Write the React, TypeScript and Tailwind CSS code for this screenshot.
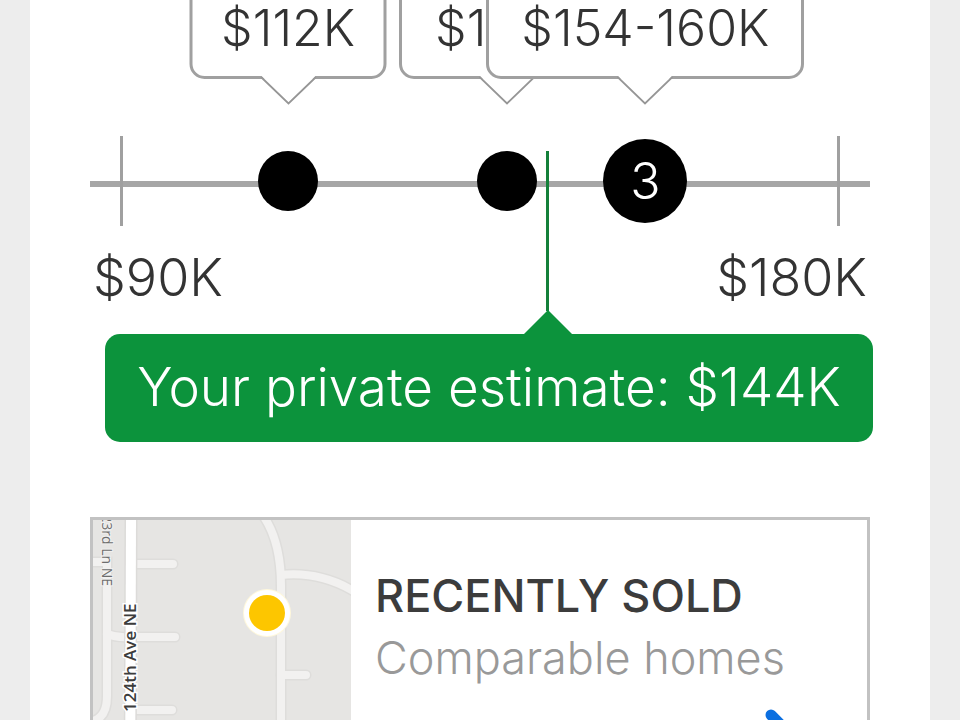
interface Comparable {
  label: string;
  left: string;
  width: string;
  count?: number;
}

const comparables: Comparable[] = [
  { label: "$112K", left: "left-[25.4%]", width: "w-[197px]" },
  { label: "$138K", left: "left-[53.5%]", width: "w-[216px]" },
  { label: "$154-160K", left: "left-[71.2%]", width: "w-[318px]", count: 3 },
];

function Callout({ label, left, width }: Comparable) {
  return (
    <div className={`absolute bottom-0 -translate-x-1/2 flex flex-col items-center ${left}`}>
      <div
        className={`h-[108px] rounded-[15px] border-3 border-[#a0a0a0] bg-white pt-6 text-center leading-[60px] whitespace-nowrap ${width}`}
      >
        {label}
      </div>
      <svg className="-mt-[3px] h-[29px] w-[56px]" viewBox="0 0 56 29" fill="none">
        <path d="M1 0H55L28 28Z" fill="#fff" />
        <path d="M0.5 1L28 27.5L55.5 1" stroke="#969696" strokeWidth="1.8" />
      </svg>
    </div>
  );
}

function Marker({ left, count }: Comparable) {
  return (
    <div
      className={`absolute top-1/2 flex -translate-x-1/2 -translate-y-1/2 items-center justify-center rounded-full bg-black text-white ${left} ${
        count ? "size-[84px]" : "size-[60px]"
      }`}
    >
      {count}
    </div>
  );
}

function PriceChart() {
  return (
    <section className="text-[50px] font-light text-[#333]">
      <div className="relative h-[105px]">
        {comparables.map((item) => (
          <Callout key={item.label} {...item} />
        ))}
      </div>

      <div className="relative mt-[31px] flex h-[90px] items-center">
        <div className="mt-1.5 h-1.5 w-full bg-[#a6a6a6]" />
        <div className="absolute left-[30px] h-full w-[3px] bg-[#a0a0a0]" />
        <div className="absolute right-[30px] h-full w-[3px] bg-[#a0a0a0]" />
        {comparables.map((item) => (
          <Marker key={item.label} {...item} />
        ))}
        <div className="absolute top-[15px] left-[58.5%] h-[160px] w-[3px] bg-[#14803a]" />
      </div>

      <div className="mt-[22px] flex justify-between px-[3px] text-[52px] leading-[60px]">
        <span>$90K</span>
        <span>$180K</span>
      </div>

      <div className="relative mt-[26px] -mr-[3px] ml-[15px] flex h-[108px] items-center justify-center rounded-[15px] bg-[#0c933c] text-[53px] text-white">
        <svg className="absolute -top-6 left-[57.7%] h-[25px] w-12 -translate-x-1/2" viewBox="0 0 48 25">
          <path d="M0 25V24L24 0L48 24V25Z" fill="#0c933c" />
        </svg>
        <span className="whitespace-nowrap">Your private estimate: $144K</span>
      </div>
    </section>
  );
}

function StreetMap() {
  return (
    <svg className="h-[300px] w-[258px] shrink-0 bg-[#e6e5e3]" viewBox="0 0 258 300" fill="none">
      <g stroke="#dedddb" strokeWidth="11" strokeLinecap="round">
        <path d="M42 44H80M42 117H82M42 190H79M188 155H213" />
        <path d="M0 42H14V176Q14 197 0 201M14 114Q24 118 36 117" />
        <path d="M169 -6Q188 20 188 66V300M188 55Q227 51 262 72" />
      </g>
      <g stroke="#f2f1f0" strokeWidth="8" strokeLinecap="round">
        <path d="M42 44H80M42 117H82M42 190H79M188 155H213" />
        <path d="M0 42H14V176Q14 197 0 201M14 114Q24 118 36 117" />
        <path d="M169 -6Q188 20 188 66V300M188 55Q227 51 262 72" />
      </g>
      <path d="M38 0L37 300" stroke="#dcdbd9" strokeWidth="13" />
      <path d="M38 0L37 300" stroke="#fff" strokeWidth="10" />
      <g fontFamily="'Open Sans', sans-serif">
        <text
          transform="translate(9 66) rotate(90)"
          textAnchor="end"
          fontSize="14"
          fontWeight="500"
          fill="#6e6e6e"
          stroke="#f2f1f0"
          strokeWidth="2"
          paintOrder="stroke"
        >
          123rd Ln NE
        </text>
        <text
          transform="translate(43 192) rotate(-90)"
          fontSize="17"
          fontWeight="600"
          fill="#3c3c3c"
          stroke="#fff"
          strokeWidth="3"
          paintOrder="stroke"
        >
          124th Ave NE
        </text>
      </g>
      <circle cx="174" cy="93" r="24" fill="#fff8dc" />
      <circle cx="174" cy="93" r="23" fill="#fff" />
      <circle cx="174" cy="93" r="18" fill="#fdc600" />
    </svg>
  );
}

function RecentlySoldCard() {
  return (
    <a href="#comparable-homes" className="mt-[75px] flex border-3 border-[#c2c2c2] bg-white">
      <StreetMap />
      <div className="flex grow flex-col pt-[50px] pl-6 text-[45px] whitespace-nowrap">
        <h2 className="leading-[52px] font-medium text-[#3c3c3c]">RECENTLY SOLD</h2>
        <p className="mt-2 leading-[56px] font-light text-[#999]">Comparable homes</p>
        <svg className="mt-[22px] mr-[66px] h-[60px] w-9 self-end" viewBox="0 0 36 60" fill="none">
          <path d="M6 7L29 30L6 53" stroke="#0b6fe0" strokeWidth="11" strokeLinecap="round" />
        </svg>
      </div>
    </a>
  );
}

export default function App() {
  return (
    <div className="h-screen overflow-hidden bg-[#ededed] px-[30px] font-['Inter','Liberation_Sans',sans-serif]">
      <main className="min-h-full bg-white px-[60px]">
        <PriceChart />
        <RecentlySoldCard />
      </main>
    </div>
  );
}
